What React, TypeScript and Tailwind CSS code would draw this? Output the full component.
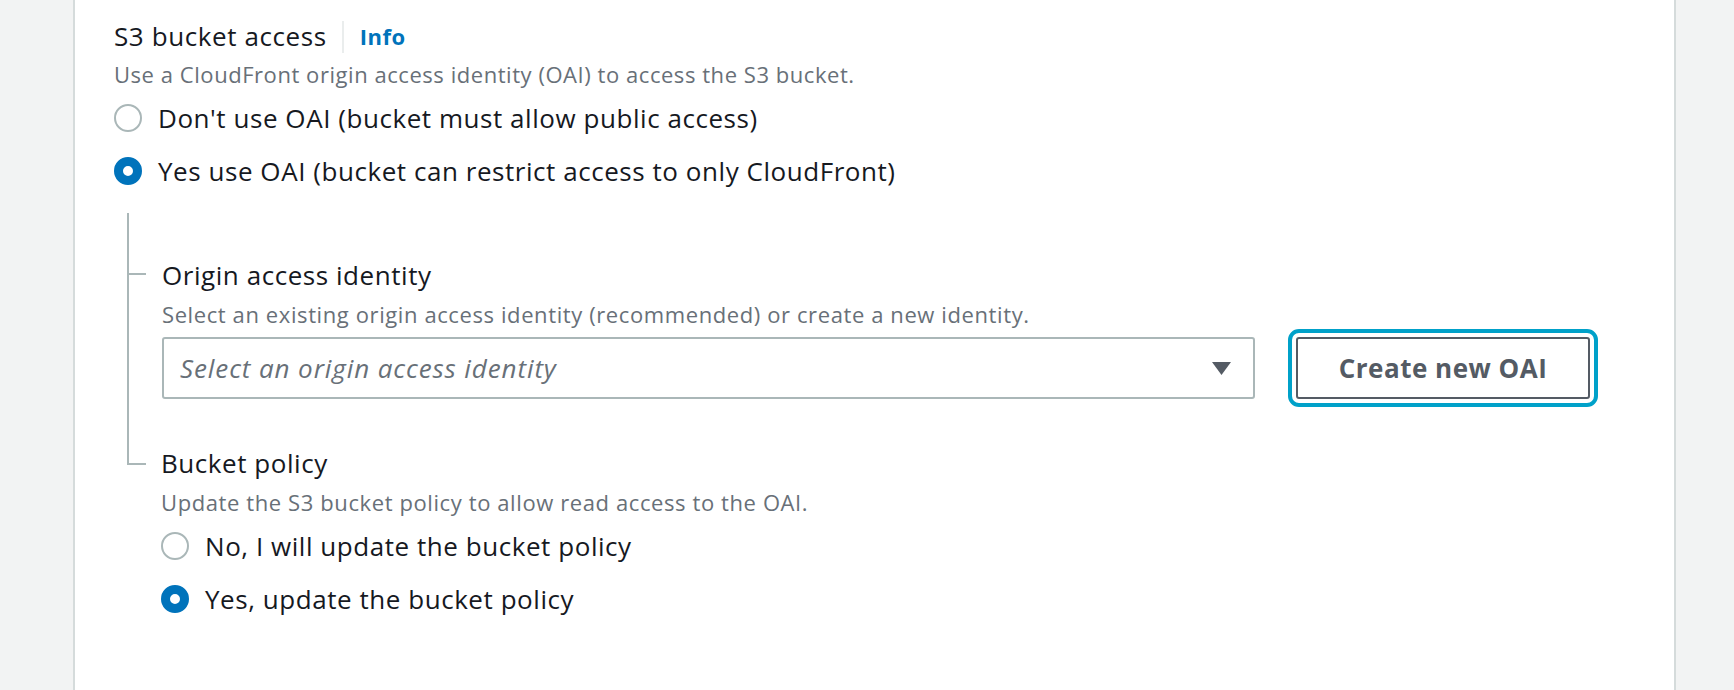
import React from 'react';

const Radio: React.FC<{ checked?: boolean; label: string }> = ({ checked, label }) => {
  return (
    <div className="flex items-center h-[40px] gap-[16px]">
      {checked ? (
        <span className="w-[28px] h-[28px] rounded-full border-[9px] border-[#0073bb] bg-white shrink-0" />
      ) : (
        <span className="w-[28px] h-[28px] rounded-full border-[2.5px] border-[#aab7b8] bg-white shrink-0" />
      )}
      <span className="text-[26px] leading-[40px] tracking-[0.55px] text-[#16191f]">{label}</span>
    </div>
  );
};

const App: React.FC = () => {
  return (
    <div
      className="w-full h-[690px] bg-[#f2f3f3] flex pl-[73px] pr-[58px] overflow-hidden"
      style={{ fontFamily: '"Open Sans", "Noto Sans", sans-serif' }}
    >
      <div className="flex-1 bg-white border-x-2 border-[#d5dbdb] pl-[39px] pr-[84px] pt-[20px]">
        {/* Header */}
        <div className="flex items-center h-[33px]">
          <span className="text-[26px] leading-[33px] tracking-[0.6px] text-[#16191f]">S3 bucket access</span>
          <span className="w-[2px] h-[32px] bg-[#eaeded] ml-[15px] mr-[16px]" />
          <span className="text-[22px] font-bold tracking-[0.5px] text-[#0073bb]">Info</span>
        </div>
        <div className="mt-[7px] h-[28px] text-[22px] leading-[28px] tracking-[0.55px] text-[#687078]">
          Use a CloudFront origin access identity (OAI) to access the S3 bucket.
        </div>

        <div className="mt-[10px]">
          <Radio label="Don't use OAI (bucket must allow public access)" />
        </div>
        <div className="mt-[13px]">
          <Radio checked label="Yes use OAI (bucket can restrict access to only CloudFront)" />
        </div>

        {/* Nested options */}
        <div className="mt-[22px] ml-[13px]">
          {/* Origin access identity */}
          <div className="flex">
            <div className="flex flex-col w-[19px] shrink-0">
              <div className="h-[62px] border-l-2 border-b-2 border-[#aab7b8]" />
              <div className="flex-1 border-l-2 border-[#aab7b8]" />
            </div>
            <div className="flex-1 pl-[16px] pt-[46px] pb-[20px]">
              <div className="h-[32px] text-[26px] leading-[32px] tracking-[0.55px] text-[#16191f]">Origin access identity</div>
              <div className="mt-[9px] h-[28px] text-[22px] leading-[28px] tracking-[0.6px] text-[#687078]">
                Select an existing origin access identity (recommended) or create a new identity.
              </div>
              <div className="mt-[9px] flex items-center gap-[41px]">
                <div className="flex-1 h-[62px] border-2 border-[#aab7b8] rounded-[3px] flex items-center justify-between pl-[16px] pr-[22px]">
                  <span className="text-[26px] italic tracking-[0.9px] text-[#687078]">Select an origin access identity</span>
                  <svg width="19" height="13" viewBox="0 0 19 13">
                    <path d="M0 0 H19 L9.5 13 Z" fill="#545b64" />
                  </svg>
                </div>
                <button className="w-[294px] h-[62px] border-2 border-[#545b64] rounded-[3px] bg-white outline-4 outline-offset-[4px] outline-[#00a1c9] text-[26px] font-bold tracking-[0.5px] text-[#545b64]">
                  Create new OAI
                </button>
              </div>
            </div>
          </div>

          {/* Bucket policy */}
          <div className="flex">
            <div className="flex flex-col w-[19px] shrink-0">
              <div className="h-[46px] border-l-2 border-b-2 border-[#aab7b8]" />
            </div>
            <div className="flex-1 pl-[15px] pt-[28px]">
              <div className="h-[32px] text-[26px] leading-[32px] tracking-[0.55px] text-[#16191f]">Bucket policy</div>
              <div className="mt-[9px] h-[28px] text-[22px] leading-[28px] tracking-[0.6px] text-[#687078]">
                Update the S3 bucket policy to allow read access to the OAI.
              </div>
              <div className="mt-[10px]">
                <Radio label="No, I will update the bucket policy" />
              </div>
              <div className="mt-[13px]">
                <Radio checked label="Yes, update the bucket policy" />
              </div>
            </div>
          </div>
        </div>
      </div>
    </div>
  );
};

export default App;
